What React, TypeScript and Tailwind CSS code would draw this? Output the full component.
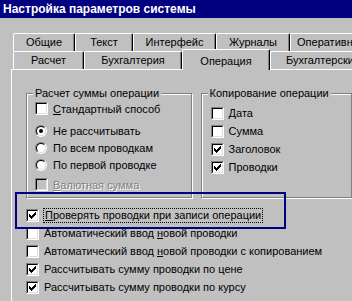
import React from 'react';

const Check = () => (
    <svg width="7" height="7" viewBox="0 0 7 7" shapeRendering="crispEdges">
        <path d="M0 2h1v3H0zM1 3h1v3H1zM2 4h1v3H2zM3 3h1v3H3zM4 2h1v3H4zM5 1h1v3H5zM6 0h1v3H6z" fill="#000" />
    </svg>
);

const CheckBox: React.FC<{ checked?: boolean; disabled?: boolean }> = ({ checked, disabled }) => (
    <div className="w-[13px] h-[13px] shrink-0 border border-t-[#808080] border-l-[#808080] border-b-white border-r-white">
        <div
            className={`w-full h-full flex items-center justify-center border border-t-black border-l-black border-b-[#dfdfdf] border-r-[#dfdfdf] ${disabled ? 'bg-[#c0c0c0]' : 'bg-white'}`}
        >
            {checked && <Check />}
        </div>
    </div>
);

const Radio: React.FC<{ checked?: boolean }> = ({ checked }) => (
    <div className="w-[12px] h-[12px] shrink-0 rounded-full border border-t-[#808080] border-l-[#808080] border-b-white border-r-white">
        <div className="w-full h-full rounded-full flex items-center justify-center bg-white border border-t-black border-l-black border-b-[#dfdfdf] border-r-[#dfdfdf]">
            {checked && <div className="w-[4px] h-[4px] rounded-full bg-black" />}
        </div>
    </div>
);

const Group: React.FC<{ title: string; className?: string; children: React.ReactNode }> = ({ title, className, children }) => (
    <div className={`relative border border-[#808080] shadow-[inset_1px_1px_0_#fff,1px_1px_0_#fff] ${className ?? ''}`}>
        <span className="absolute -top-[8px] left-[6px] px-[2px] bg-[#c0c0c0] leading-[14px] whitespace-nowrap">{title}</span>
        {children}
    </div>
);

const Tab: React.FC<{ label: string; className?: string }> = ({ label, className }) => (
    <div
        className={`h-full shrink-0 flex items-center justify-center whitespace-nowrap border-t border-l border-r border-t-white border-l-white border-r-black rounded-t-[2px] shadow-[inset_-1px_0_0_#808080] ${className ?? ''}`}
    >
        {label}
    </div>
);

const Label = ({ children }: { children: React.ReactNode }) => <span className="whitespace-nowrap leading-[14px]">{children}</span>;

export default function App() {
    return (
        <div className="w-[352px] h-[301px] overflow-hidden relative bg-[#c0c0c0] text-black text-[11px] font-['Liberation_Sans',Arial,sans-serif]">
            {/* заголовок окна */}
            <div className="h-[18px] bg-[#000080] text-white font-bold text-[12px] leading-[18px] pl-[3px] whitespace-nowrap">
                Настройка параметров системы
            </div>

            <div className="ml-[11px] mt-[15px]">
                {/* вкладки, первый ряд */}
                <div className="flex h-[18px] ml-[2px]">
                    <Tab label="Общие" className="w-[62px]" />
                    <Tab label="Текст" className="w-[58px]" />
                    <Tab label="Интерфейс" className="w-[83px]" />
                    <Tab label="Журналы" className="w-[74px]" />
                    <Tab label="Оперативный учет" className="w-[110px] !justify-start pl-[6px]" />
                </div>
                {/* вкладки, второй ряд */}
                <div className="flex items-end h-[18px] ml-[2px]">
                    <Tab label="Расчет" className="w-[71px]" />
                    <Tab label="Бухгалтерия" className="w-[98px]" />
                    <div className="relative z-10 w-[88px] h-[21px] -mb-[1px] shrink-0 flex items-start justify-center pt-[3px] bg-[#c0c0c0] border-t border-l border-r border-t-white border-l-white border-r-black rounded-t-[2px] shadow-[inset_-1px_0_0_#808080]">
                        Операция
                    </div>
                    <Tab label="Бухгалтерские итоги" className="w-[120px] !justify-start pl-[15px]" />
                </div>

                {/* панель */}
                <div className="h-[232px] border-t border-l border-white">
                    <div className="flex mt-[23px] pl-[14px]">
                        <Group title="Расчет суммы операции" className="w-[175px] h-[105px]">
                            <div className="flex flex-col pl-[8px]">
                                <div className="flex items-center gap-[5px] h-[17px] mt-[6px]">
                                    <CheckBox />
                                    <Label><u className="underline-offset-[1px]">С</u>тандартный способ</Label>
                                </div>
                                <div className="flex items-center gap-[6px] h-[17px] mt-[5px]">
                                    <Radio checked />
                                    <Label>Не рассчитывать</Label>
                                </div>
                                <div className="flex items-center gap-[6px] h-[17px]">
                                    <Radio />
                                    <Label>По всем проводкам</Label>
                                </div>
                                <div className="flex items-center gap-[6px] h-[17px]">
                                    <Radio />
                                    <Label>По первой проводке</Label>
                                </div>
                                <div className="flex items-center gap-[5px] h-[17px] mt-[3px]">
                                    <CheckBox disabled />
                                    <span className="whitespace-nowrap leading-[14px] text-[#808080] [text-shadow:1px_1px_0_#fff]">
                                        <u className="underline-offset-[1px]">В</u>алютная сумма
                                    </span>
                                </div>
                            </div>
                        </Group>

                        <Group title="Копирование операции" className="ml-[9px] w-[160px] h-[105px]">
                            <div className="flex flex-col pl-[9px] mt-[10px]">
                                {[
                                    { label: 'Дата', checked: false },
                                    { label: 'Сумма', checked: false },
                                    { label: 'Заголовок', checked: true },
                                    { label: 'Проводки', checked: true },
                                ].map((item) => (
                                    <div key={item.label} className="flex items-center gap-[5px] h-[18px]">
                                        <CheckBox checked={item.checked} />
                                        <Label>{item.label}</Label>
                                    </div>
                                ))}
                            </div>
                        </Group>
                    </div>

                    {/* флажки под группами */}
                    <div className="flex flex-col mt-[8px] pl-[14px]">
                        <div className="flex items-center gap-[4px] h-[18px]">
                            <CheckBox checked />
                            <span className="whitespace-nowrap leading-[13px] border border-dotted border-black px-[1px]">
                                <u className="underline-offset-[1px]">П</u>роверять проводки при записи операции
                            </span>
                        </div>
                        <div className="flex items-center gap-[5px] h-[18px]">
                            <CheckBox />
                            <Label>Автоматический ввод <u className="underline-offset-[1px]">н</u>овой проводки</Label>
                        </div>
                        <div className="flex items-center gap-[5px] h-[18px]">
                            <CheckBox />
                            <Label>Автоматический ввод <u className="underline-offset-[1px]">н</u>овой проводки с копированием</Label>
                        </div>
                        <div className="flex items-center gap-[5px] h-[18px]">
                            <CheckBox checked />
                            <Label>Рассчитывать сумму проводки по цене</Label>
                        </div>
                        <div className="flex items-center gap-[5px] h-[18px]">
                            <CheckBox checked />
                            <Label>Рассчитывать сумму проводки по курсу</Label>
                        </div>
                    </div>
                </div>
            </div>

            {/* синяя рамка-выделение */}
            <div className="absolute left-[15px] top-[192px] w-[271px] h-[37px] border-2 border-[#000080] pointer-events-none" />
        </div>
    );
}
